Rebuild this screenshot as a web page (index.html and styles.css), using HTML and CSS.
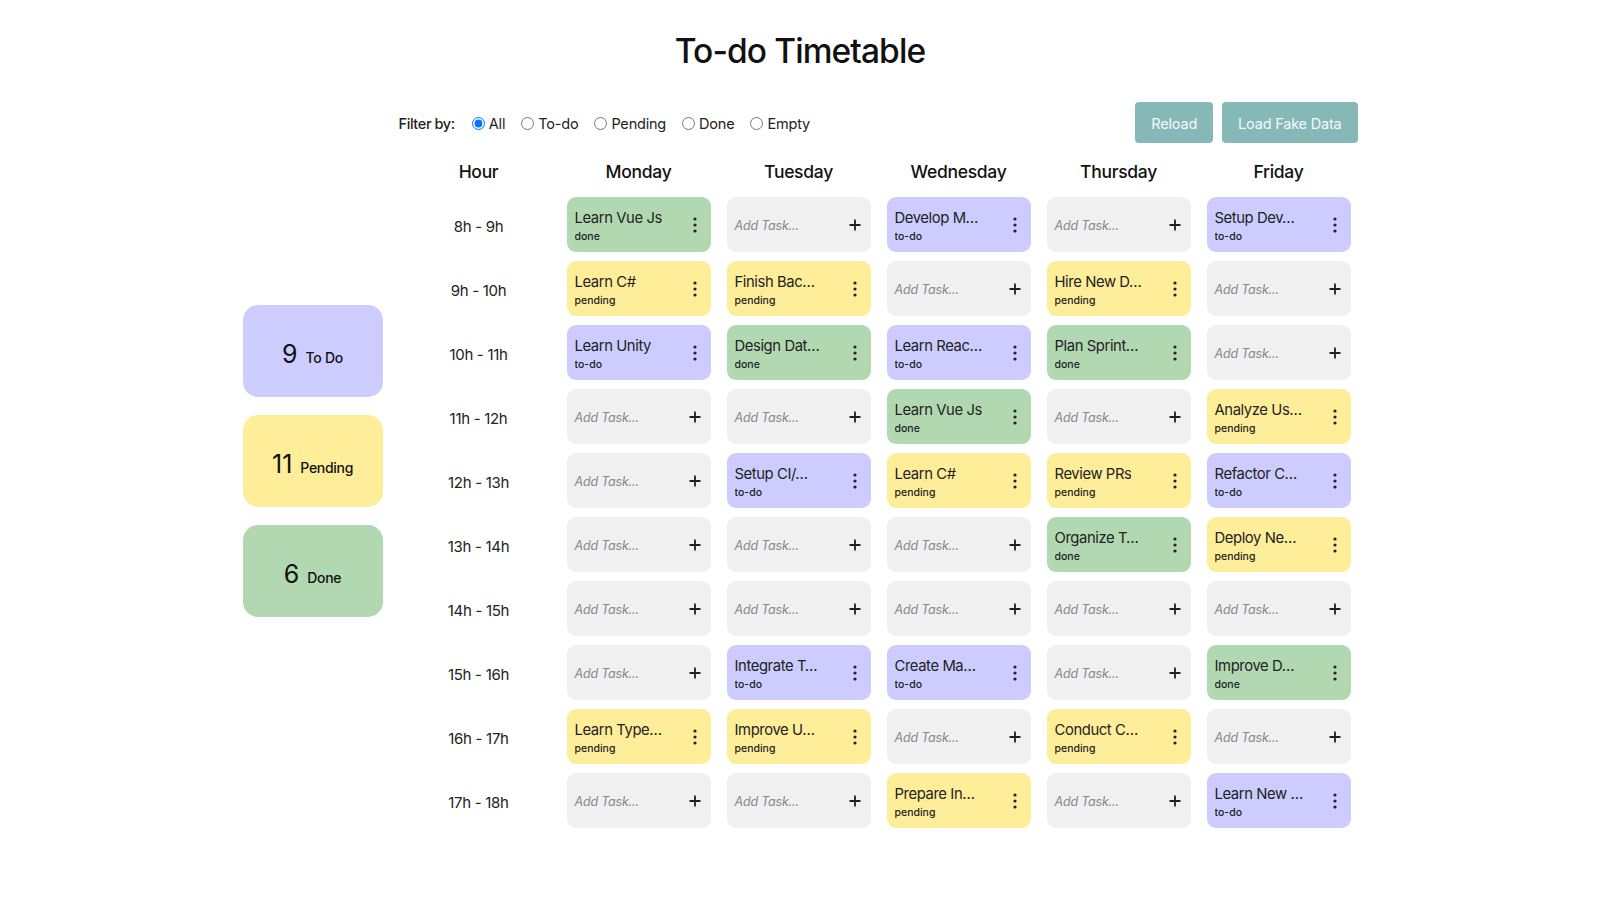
FILE: index.html
```html
<!DOCTYPE html>
<html lang="en">
<head>
<meta charset="utf-8">
<title>To-do Timetable</title>
<link rel="stylesheet" href="styles.css">
</head>
<body>
<div class="app">
  <h1 class="title">To-do Timetable</h1>
  <div class="main">
    <aside class="summary">
      <div class="stat stat-todo"><span class="stat-num">9</span><span class="stat-label">To Do</span></div>
      <div class="stat stat-pending"><span class="stat-num">11</span><span class="stat-label">Pending</span></div>
      <div class="stat stat-done"><span class="stat-num">6</span><span class="stat-label">Done</span></div>
    </aside>
    <section class="board">
      <div class="toolbar">
        <div class="filter">
          <span class="filter-title">Filter by:</span>
          <label class="opt"><input type="radio" name="f" checked>All</label>
          <label class="opt"><input type="radio" name="f">To-do</label>
          <label class="opt"><input type="radio" name="f">Pending</label>
          <label class="opt"><input type="radio" name="f">Done</label>
          <label class="opt"><input type="radio" name="f">Empty</label>
        </div>
        <div class="actions">
          <button class="btn">Reload</button>
          <button class="btn">Load Fake Data</button>
        </div>
      </div>
      <div class="head">
        <div>Hour</div><div>Monday</div><div>Tuesday</div><div>Wednesday</div><div>Thursday</div><div>Friday</div>
      </div>
      <div class="grid" id="grid"></div>
    </section>
  </div>
</div>
<script src="app.js"></script>
</body>
</html>
```

FILE: app.js
```js
var rows = [
  ["8h - 9h", [["Learn Vue Js","done"], null, ["Develop M\u2026","to-do"], null, ["Setup Dev\u2026","to-do"]]],
  ["9h - 10h", [["Learn C#","pending"], ["Finish Bac\u2026","pending"], null, ["Hire New D\u2026","pending"], null]],
  ["10h - 11h", [["Learn Unity","to-do"], ["Design Dat\u2026","done"], ["Learn Reac\u2026","to-do"], ["Plan Sprint\u2026","done"], null]],
  ["11h - 12h", [null, null, ["Learn Vue Js","done"], null, ["Analyze Us\u2026","pending"]]],
  ["12h - 13h", [null, ["Setup CI/\u2026","to-do"], ["Learn C#","pending"], ["Review PRs","pending"], ["Refactor C\u2026","to-do"]]],
  ["13h - 14h", [null, null, null, ["Organize T\u2026","done"], ["Deploy Ne\u2026","pending"]]],
  ["14h - 15h", [null, null, null, null, null]],
  ["15h - 16h", [null, ["Integrate T\u2026","to-do"], ["Create Ma\u2026","to-do"], null, ["Improve D\u2026","done"]]],
  ["16h - 17h", [["Learn Type\u2026","pending"], ["Improve U\u2026","pending"], null, ["Conduct C\u2026","pending"], null]],
  ["17h - 18h", [null, null, ["Prepare In\u2026","pending"], null, ["Learn New \u2026","to-do"]]]
];
var kebab = '<svg class="icon" width="12" height="18" viewBox="0 0 12 18"><circle cx="6" cy="3" r="1.6"/><circle cx="6" cy="9" r="1.6"/><circle cx="6" cy="15" r="1.6"/></svg>';
var plus = '<svg class="icon" width="12" height="12" viewBox="0 0 12 12"><path d="M6 0.5v11M0.5 6h11" stroke="#222" stroke-width="1.8" fill="none"/></svg>';
var html = "";
rows.forEach(function (r) {
  html += '<div class="hour">' + r[0] + '</div>';
  r[1].forEach(function (c) {
    if (c) {
      var cls = c[1] === "to-do" ? "todo" : c[1];
      html += '<div class="cell ' + cls + '"><div class="task"><div class="task-title">' + c[0] + '</div><div class="task-status">' + c[1] + '</div></div>' + kebab + '</div>';
    } else {
      html += '<div class="cell empty"><span class="add">Add Task...</span>' + plus + '</div>';
    }
  });
});
document.getElementById("grid").innerHTML = html;
```

FILE: styles.css
```css
* { box-sizing: border-box; }
body {
  margin: 0;
  font-family: Inter, "Noto Sans", sans-serif;
  color: #111;
  background: #fff;
}
.app {
  width: 1115px;
  margin: 0 auto;
}
.title {
  margin: 31px 0 0;
  text-align: center;
  font-size: 33.5px;
  line-height: 40px;
  font-weight: 500;
  letter-spacing: -0.9px;
}
.main {
  display: flex;
  align-items: center;
  gap: 16px;
  margin-top: 31px;
}
.summary {
  width: 140px;
  display: flex;
  flex-direction: column;
  gap: 18px;
  margin-bottom: 8px;
}
.stat {
  height: 92px;
  border-radius: 15px;
  display: flex;
  align-items: baseline;
  justify-content: center;
  padding-top: 37px;
  gap: 8px;
}
.stat-todo { background: #ccccff; }
.stat-pending { background: #ffee99; }
.stat-done { background: #b2d8b2; }
.stat-num { font-size: 25px; line-height: 24px; font-weight: 400; }
.stat-label { font-size: 14px; font-weight: 500; letter-spacing: -0.3px; }
.board {
  flex: 1;
}
.toolbar {
  display: flex;
  justify-content: space-between;
  align-items: center;
  height: 41px;
  padding-top: 2px;
}
.filter {
  display: flex;
  align-items: center;
  font-size: 14.5px;
  color: #222;
  letter-spacing: -0.2px;
}
.filter-title {
  font-weight: 500;
  margin-right: 17px;
  letter-spacing: -0.4px;
}
.opt {
  display: flex;
  align-items: center;
  margin-right: 16px;
}
.opt input {
  margin: 0 4px 0 0;
  width: 13px;
  height: 13px;
}
.actions {
  display: flex;
  gap: 9px;
  margin-top: -2px;
}
.btn {
  height: 41px;
  padding: 0 16px;
  border: none;
  border-radius: 4px;
  background: #86b8b8;
  color: #f4f8f8;
  font-family: inherit;
  font-size: 14.5px;
  letter-spacing: -0.2px;
  padding-top: 2px;
}
.head {
  display: grid;
  grid-template-columns: repeat(6, 144px);
  column-gap: 16px;
  margin: 16px 0 14px 8px;
  height: 24px;
  align-items: center;
  text-align: center;
  font-size: 17.5px;
  font-weight: 500;
  letter-spacing: -0.3px;
}
.grid {
  display: grid;
  grid-template-columns: repeat(6, 144px);
  grid-auto-rows: 55px;
  column-gap: 16px;
  row-gap: 9px;
  margin-left: 8px;
}
.hour {
  display: flex;
  align-items: center;
  justify-content: center;
  padding-top: 4px;
  font-size: 15px;
  color: #222;
  letter-spacing: -0.3px;
}
.cell {
  border-radius: 9px;
  display: flex;
  align-items: center;
  justify-content: space-between;
  padding: 0 10px 0 8px;
}
.todo { background: #ccccff; }
.pending { background: #ffee99; }
.done { background: #b2d8b2; }
.empty { background: #f0f0f0; }
.task {
  padding-top: 4px;
  overflow: hidden;
}
.task-title {
  font-size: 14.8px;
  line-height: 18px;
  color: #222;
  white-space: nowrap;
  overflow: hidden;
  letter-spacing: -0.4px;
}
.task-status {
  font-size: 10.5px;
  line-height: 14px;
  margin-top: 3px;
  font-weight: 500;
  color: #222;
}
.add {
  font-size: 12.5px;
  font-style: italic;
  color: #888;
  letter-spacing: -0.2px;
  padding-top: 2px;
}
.icon {
  flex: none;
  fill: #222;
}
```
